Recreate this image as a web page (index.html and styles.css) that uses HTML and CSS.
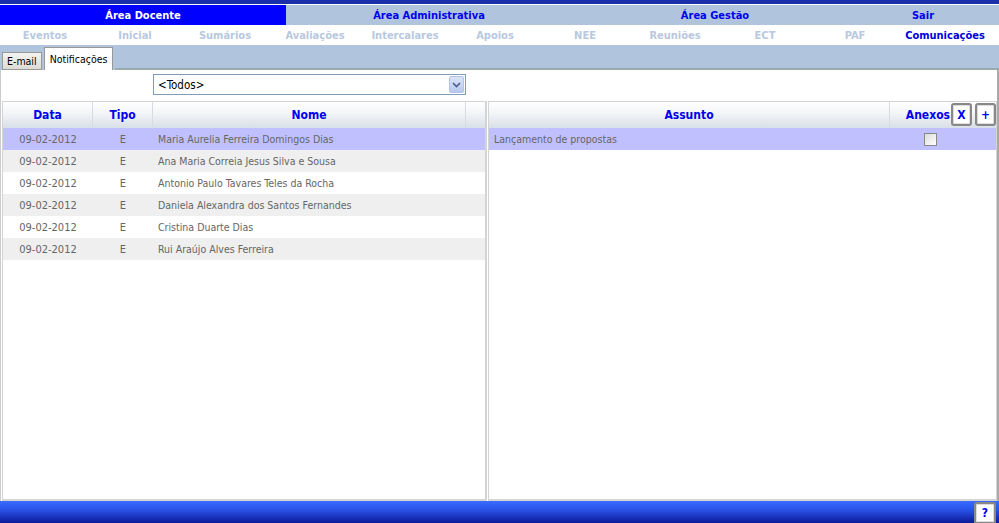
FILE: index.html
```html
<!DOCTYPE html>
<html>
<head>
<meta charset="utf-8">
<link rel="stylesheet" href="styles.css">
</head>
<body>
<div class="page">
  <div class="topline"></div>
  <div class="areas">
    <div class="area active">Área Docente</div>
    <div class="area">Área Administrativa</div>
    <div class="area">Área Gestão</div>
    <div class="area">Sair</div>
  </div>
  <div class="modules">
    <div class="mod">Eventos</div>
    <div class="mod">Inicial</div>
    <div class="mod">Sumários</div>
    <div class="mod">Avaliações</div>
    <div class="mod">Intercalares</div>
    <div class="mod">Apoios</div>
    <div class="mod">NEE</div>
    <div class="mod">Reuniões</div>
    <div class="mod">ECT</div>
    <div class="mod">PAF</div>
    <div class="mod current">Comunicações</div>
  </div>
  <div class="tabs">
    <div class="tab">E-mail</div>
    <div class="tab selected">Notificações</div>
    <div class="tabfill"></div>
  </div>
  <div class="content">
    <div class="filter">
      <div class="select">
        <span>&lt;Todos&gt;</span>
        <span class="arrow"><svg width="9" height="6" viewBox="0 0 9 6"><path d="M1 1 L4.5 4.5 L8 1" fill="none" stroke="#4a5f8a" stroke-width="1.6"/></svg></span>
      </div>
    </div>
    <div class="panels">
      <div class="panel left">
        <div class="thead">
          <div class="th c-data">Data</div>
          <div class="th c-tipo">Tipo</div>
          <div class="th c-nome">Nome</div>
          <div class="th c-scroll"></div>
        </div>
        <div class="row sel"><div class="c-data td">09-02-2012</div><div class="c-tipo td">E</div><div class="c-nome td name">Maria Aurelia Ferreira Domingos Dias</div></div>
        <div class="row alt"><div class="c-data td">09-02-2012</div><div class="c-tipo td">E</div><div class="c-nome td name">Ana Maria Correia Jesus Silva e Sousa</div></div>
        <div class="row"><div class="c-data td">09-02-2012</div><div class="c-tipo td">E</div><div class="c-nome td name">Antonio Paulo Tavares Teles da Rocha</div></div>
        <div class="row alt"><div class="c-data td">09-02-2012</div><div class="c-tipo td">E</div><div class="c-nome td name">Daniela Alexandra dos Santos Fernandes</div></div>
        <div class="row"><div class="c-data td">09-02-2012</div><div class="c-tipo td">E</div><div class="c-nome td name">Cristina Duarte Dias</div></div>
        <div class="row alt"><div class="c-data td">09-02-2012</div><div class="c-tipo td">E</div><div class="c-nome td name">Rui Araújo Alves Ferreira</div></div>
      </div>
      <div class="panel right">
        <div class="thead">
          <div class="th c-assunto">Assunto</div>
          <div class="th c-anexos">Anexos</div>
          <div class="btns"><button class="btn">X</button><button class="btn">+</button></div>
        </div>
        <div class="row sel"><div class="c-assunto td name">Lançamento de propostas</div><div class="c-anexos td"><span class="check"></span></div></div>
      </div>
    </div>
  </div>
  <div class="footer">
    <button class="btn help">?</button>
  </div>
</div>
</body>
</html>
```
FILE: styles.css
```css
* { box-sizing: border-box; }
html, body { margin: 0; padding: 0; }
body { font-family: "DejaVu Sans Condensed", "DejaVu Sans", sans-serif; background: #fff; }
.page { width: 999px; height: 523px; overflow: hidden; display: flex; flex-direction: column; }
.topline { height: 5px; background: #1a30aa; border-bottom: 1px solid #fff; flex: none; }
.areas { display: grid; grid-template-columns: 286px 286px 286px 130px; height: 20px; background: #b0c4de; flex: none; }
.area { font-size: 11px; font-weight: bold; color: #0000ee; display: flex; align-items: center; justify-content: center; }
.area.active { background: #0000ff; color: #fff; }
.modules { display: grid; grid-template-columns: repeat(11, 90px); height: 20px; background: #fff; flex: none; }
.mod { font-size: 11px; font-weight: bold; color: #b8c8e0; display: flex; align-items: center; justify-content: center; }
.mod.current { color: #0000dd; }
.tabs { height: 25px; background: #b0c4de; display: flex; align-items: flex-end; padding-left: 2px; flex: none; }
.tab { font-size: 10.5px; color: #000; height: 18px; padding: 0 4px; display: flex; align-items: center; background: linear-gradient(#f4f4f0, #dcdcd4); border: 1px solid #999; margin-right: 2px; }
.tab.selected { height: 23px; background: #fff; border-bottom: none; padding: 0 5px; }
.tabfill { flex: 1; border-bottom: 2px solid #9aa; height: 2px; }
.content { flex: 1; border-right: 2px solid #aaa; border-left: 1px solid #ccc; display: flex; flex-direction: column; background: #fff; }
.filter { height: 31px; padding: 4px 0 0 152px; flex: none; }
.select { width: 313px; height: 21px; border: 1px solid #7f9db9; display: flex; align-items: center; justify-content: space-between; padding-left: 4px; font-size: 11.5px; }
.arrow { width: 15px; height: 17px; margin-right: 1px; background: linear-gradient(#dbe4f6, #b9c9ef); border: 1px solid #b2c3e8; border-radius: 2px; display: flex; align-items: center; justify-content: center; }
.panels { flex: 1; display: flex; gap: 1px; padding-left: 1px; }
.panel { border: 1px solid #d4d4d4; border-bottom-width: 2px; display: flex; flex-direction: column; }
.panel.left { width: 486px; border-width: 1px 2px 2px 1px; }
.panel.right { flex: 1; }
.thead { height: 26px; display: flex; background: linear-gradient(#ffffff, #f4f6f9 40%, #d9dfe7); flex: none; }
.th { font-size: 12px; font-weight: bold; color: #0000ee; display: flex; align-items: center; justify-content: center; border-right: 1px solid #d6dce4; }
.c-data { width: 90px; flex: none; }
.c-tipo { width: 60px; flex: none; }
.c-nome { width: 313px; flex: none; }
.c-scroll { flex: 1; border-right: none; }
.c-assunto { width: 401px; flex: none; }
.c-anexos { width: 60px; flex: none; border-right: none; justify-content: flex-end; }
.btns { display: flex; gap: 3px; padding: 1px 0 0 1px; }
.btn { width: 21px; height: 23px; padding: 0; border: 2px solid #888; border-radius: 3px; background: #fff; color: #0000ee; font-weight: bold; font-size: 12px; font-family: "DejaVu Sans Condensed", "DejaVu Sans", sans-serif; box-shadow: inset 0 0 0 1px #ddd; }
.row { height: 22px; display: flex; flex: none; }
.row.sel { background: #c0c0ff; }
.row.alt { background: #efefef; }
.td { font-size: 11px; color: #666; display: flex; align-items: center; justify-content: center; }
.td.name { justify-content: flex-start; padding-left: 5px; font-size: 10.5px; }
.row .c-anexos { justify-content: center; padding-left: 20px; }
.check { width: 13px; height: 13px; border: 1px solid #888; background: linear-gradient(135deg, #dcdcdc, #fff); }
.footer { height: 22px; flex: none; background: linear-gradient(#3a6cff, #2a52e8 40%, #0a1a99); display: flex; justify-content: flex-end; padding-right: 3px; }
.btn.help { width: 22px; height: 22px; margin-top: 1px; border-radius: 3px 3px 0 0; font-size: 12px; }
```
